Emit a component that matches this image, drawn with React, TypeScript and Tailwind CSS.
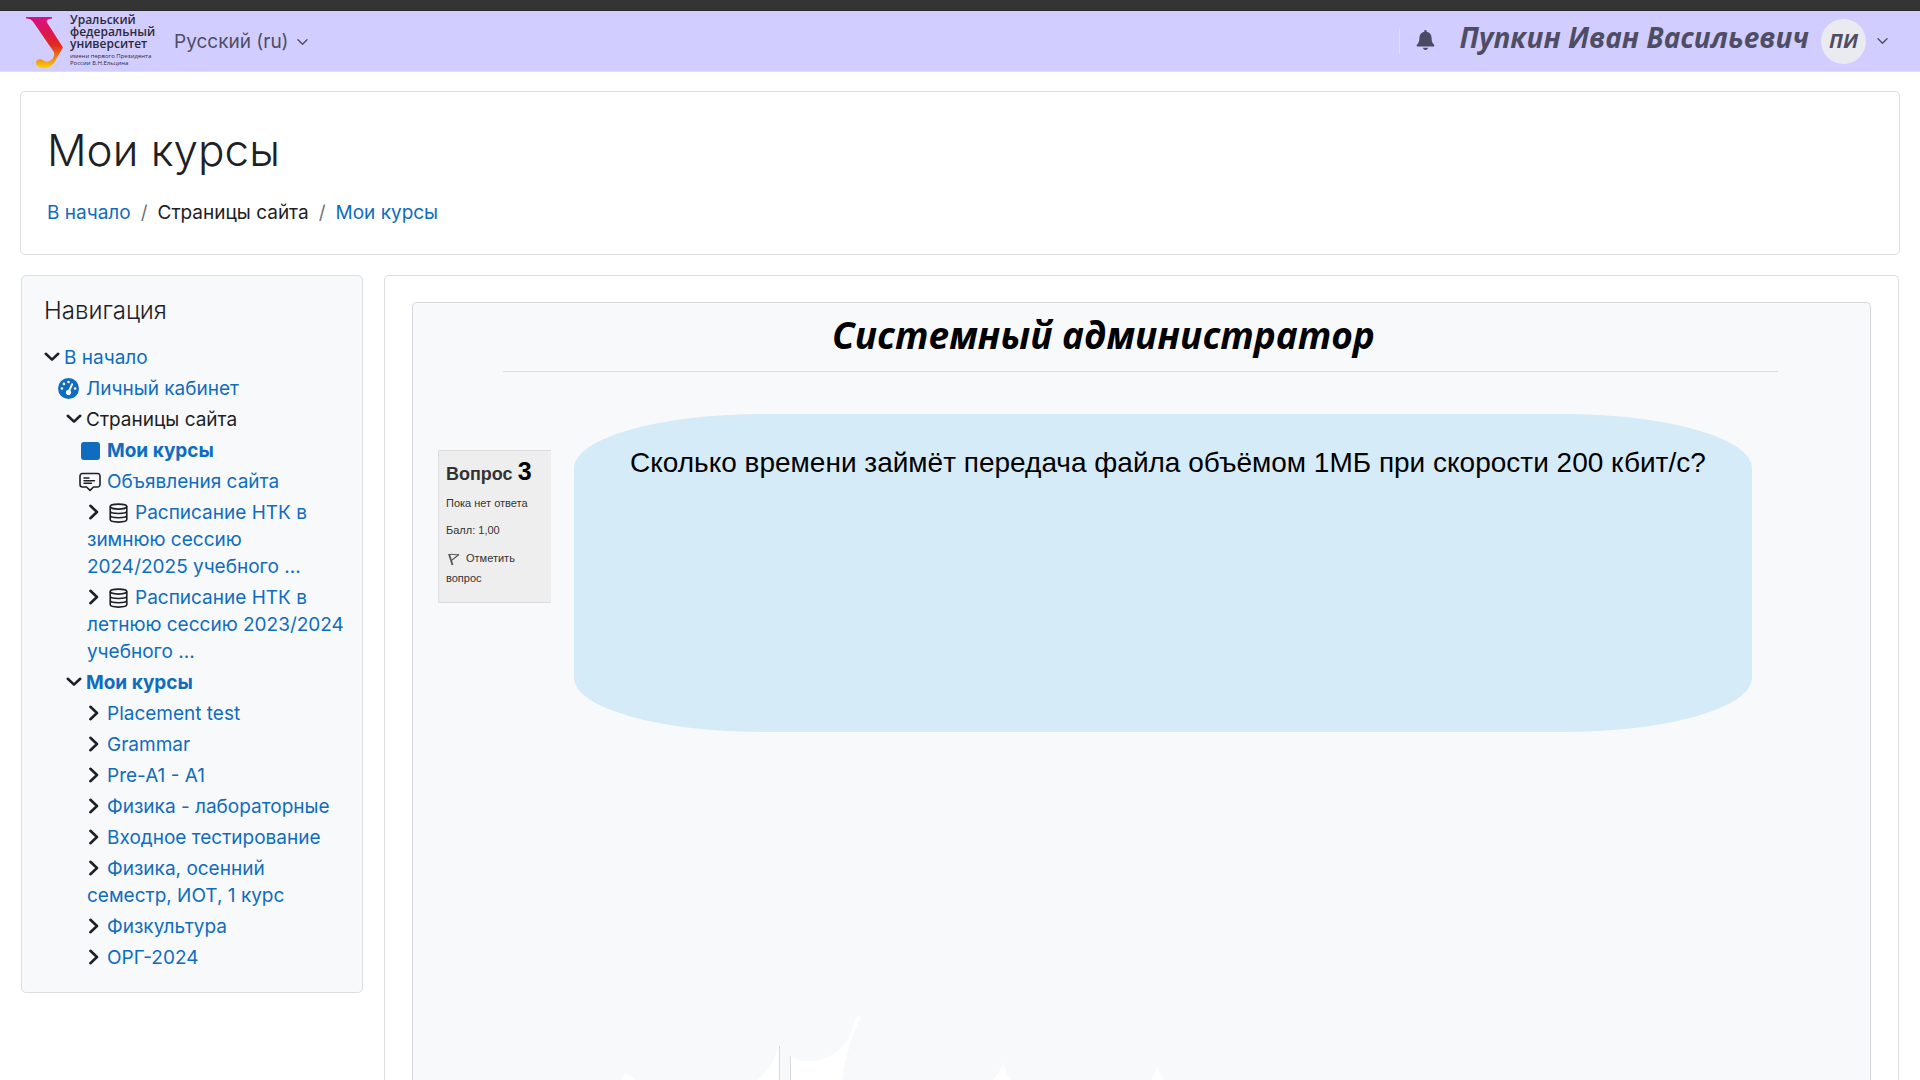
import React from "react";
import { FaGaugeHigh } from "react-icons/fa6";

type IconName = "gauge" | "square" | "comment" | "database";

interface NavItem {
  label: string;
  indent: string;
  toggle?: "open" | "closed";
  icon?: IconName;
  bold?: boolean;
  plain?: boolean;
}

const navItems: NavItem[] = [
  { label: "В начало", indent: "pl-0", toggle: "open" },
  { label: "Личный кабинет", indent: "pl-3.5", icon: "gauge" },
  { label: "Страницы сайта", indent: "pl-[22px]", toggle: "open", plain: true },
  { label: "Мои курсы", indent: "pl-[35px]", icon: "square", bold: true },
  { label: "Объявления сайта", indent: "pl-[35px]", icon: "comment" },
  { label: "Расписание НТК в зимнюю сессию 2024/2025 учебного ...", indent: "pl-[43px]", toggle: "closed", icon: "database" },
  { label: "Расписание НТК в летнюю сессию 2023/2024 учебного ...", indent: "pl-[43px]", toggle: "closed", icon: "database" },
  { label: "Мои курсы", indent: "pl-[22px]", toggle: "open", bold: true },
  { label: "Placement test", indent: "pl-[43px]", toggle: "closed" },
  { label: "Grammar", indent: "pl-[43px]", toggle: "closed" },
  { label: "Pre-A1 - A1", indent: "pl-[43px]", toggle: "closed" },
  { label: "Физика - лабораторные", indent: "pl-[43px]", toggle: "closed" },
  { label: "Входное тестирование", indent: "pl-[43px]", toggle: "closed" },
  { label: "Физика, осенний семестр, ИОТ, 1 курс", indent: "pl-[43px]", toggle: "closed" },
  { label: "Физкультура", indent: "pl-[43px]", toggle: "closed" },
  { label: "ОРГ-2024", indent: "pl-[43px]", toggle: "closed" },
];

function Chevron({ open }: { open: boolean }) {
  return open ? (
    <svg className="h-[10px] w-4" viewBox="0 0 16 10" fill="none" stroke="#1d2125" strokeWidth="2.6" strokeLinecap="round" strokeLinejoin="round">
      <path d="M1.8 1.8 8 7.6l6.2-5.8" />
    </svg>
  ) : (
    <svg className="ml-px h-4 w-[11px]" viewBox="0 0 11 16" fill="none" stroke="#1d2125" strokeWidth="2.6" strokeLinecap="round" strokeLinejoin="round">
      <path d="M2.4 1.8 9 8l-6.6 6.2" />
    </svg>
  );
}

function ThinChevron() {
  return (
    <svg className="h-1.5 w-[11px]" viewBox="0 0 11 6" fill="none" stroke="#4b4a63" strokeWidth="1.3" strokeLinecap="round" strokeLinejoin="round" aria-hidden="true">
      <path d="M1 .8 5.500 5.200 10 .8" />
    </svg>
  );
}

function NavIcon({ name }: { name: IconName }) {
  if (name === "gauge") {
    return <FaGaugeHigh className="size-[21px] text-[#0f6cbf]" aria-hidden="true" />;
  }
  if (name === "square") {
    return <span className="ml-0.5 block h-[18px] w-[19px] rounded-[3px] bg-[#0f6cbf]" />;
  }
  if (name === "comment") {
    return (
      <svg className="h-5 w-[22px]" viewBox="0 0 22 20" fill="none" stroke="#1d2125" strokeWidth="1.600" strokeLinejoin="round" strokeLinecap="round" aria-hidden="true">
        <path d="M3.500 1.500h15a2.500 2.500 0 0 1 2.500 2.500v8.500a2.500 2.500 0 0 1-2.500 2.500h-4l-3.500 3.300L7.500 15h-4A2.500 2.500 0 0 1 1 12.500V4a2.500 2.500 0 0 1 2.500-2.500Z" />
        <path d="M5 6h5M5 8.700h10.500M5 11.300h7.500" strokeWidth="1.400" />
      </svg>
    );
  }
  return (
    <svg className="h-5 w-[19px]" viewBox="0 0 19 20" fill="none" stroke="#1d2125" strokeWidth="1.600" aria-hidden="true">
      <ellipse cx="9.500" cy="3.600" rx="8.300" ry="2.500" />
      <path d="M1.200 3.600v13c0 1.500 3.700 2.500 8.300 2.500s8.300-1 8.300-2.500v-13M1.200 8c0 1.500 3.700 2.500 8.300 2.500s8.300-1 8.300-2.500M1.200 12.300c0 1.500 3.700 2.500 8.300 2.500s8.300-1 8.300-2.500" />
    </svg>
  );
}

function NavRow({ item }: { item: NavItem }) {
  const weight = item.bold ? "font-bold" : "font-normal";
  return (
    <li className={`${item.indent} pb-1 text-[19px]/[27px]`}>
      {item.toggle && (
        <button
          type="button"
          aria-label={item.toggle === "open" ? "Свернуть" : "Развернуть"}
          className="inline-flex h-[22px] w-5 items-center pb-1 align-middle"
        >
          <Chevron open={item.toggle === "open"} />
        </button>
      )}
      {item.icon && (
        <span className={`inline-flex h-[22px] items-center pb-0.5 align-middle ${item.toggle ? "w-7 pl-0.5" : "w-7"}`}>
          <NavIcon name={item.icon} />
        </span>
      )}
      {item.plain ? (
        <span>{item.label}</span>
      ) : (
        <a href="#" className={`${weight} text-[#0f6cbf]`}>
          {item.label}
        </a>
      )}
    </li>
  );
}

function Logo() {
  return (
    <a href="#" aria-label="Уральский федеральный университет" className="flex items-start gap-[7px] text-[#2b2a3a]">
      <svg className="mt-0.5 h-[53px] w-[37px]" viewBox="0 0 37 53" aria-hidden="true">
        <defs>
          <linearGradient id="logo" x1="0" y1="0" x2="0" y2="1">
            <stop offset="0" stopColor="#d90f86" />
            <stop offset="0.300" stopColor="#dc1550" />
            <stop offset="0.550" stopColor="#e02a1c" />
            <stop offset="0.780" stopColor="#f07a18" />
            <stop offset="1" stopColor="#fdd305" />
          </linearGradient>
        </defs>
        <path
          fill="url(#logo)"
          d="M0 1h26v1.500c-4 .5-6 1.500-5 4L37 31.500l-6.500 11C27 49.500 23.500 52 18 52c-5 0-8-2.500-8-5.500 0-2 1.800-3.300 4-3.300 3 0 4 2.300 7 2.300 5 0 9-6 6.500-10L8 7C5.500 3.200 3.500 2.500 0 2.500Z"
        />
      </svg>
      <span className="flex flex-col whitespace-nowrap font-['Open_Sans',sans-serif]">
        <span className="text-xs/3 font-semibold">
          <span className="block">Уральский</span>
          <span className="block">федеральный</span>
          <span className="block">университет</span>
        </span>
        <span className="mt-[3px] text-[6px]/[7px]">
          <span className="block">имени первого Президента</span>
          <span className="block">России Б.Н.Ельцина</span>
        </span>
      </span>
    </a>
  );
}

function Header() {
  return (
    <header className="border-t-[10px] border-[#343434]">
      <div className="flex h-[62px] items-center justify-between border-t border-b border-t-[#2a2830] border-b-[#dedfe6] bg-[#d2cdff] pr-8 pl-[26px] text-[#4f4d66]">
        <div className="flex items-center gap-[19px]">
          <Logo />
          <button type="button" className="flex items-center gap-2 pt-0.5 text-[19px]/6">
            Русский (ru) <ThinChevron />
          </button>
        </div>
        <div className="flex items-center">
          <span className="mr-4 h-[26px] w-px bg-[#dfe0ea]" />
          <button type="button" aria-label="Уведомления" className="pb-0.5">
            <svg className="h-5 w-[19px]" viewBox="0 0 19 20" fill="#4b4a63" aria-hidden="true">
              <path d="M9.500 0c.7 0 1.200.5 1.200 1.200v.6c2.900.6 4.900 3 4.900 6 0 4 .9 5.300 2.300 6.700.9.900.4 2.100-.8 2.100H1.900c-1.200 0-1.700-1.200-.8-2.100 1.400-1.400 2.300-2.700 2.300-6.700 0-3 2-5.400 4.900-6v-.6C8.300.5 8.800 0 9.500 0ZM7 17.700h5c-.2 1.400-1.200 2.200-2.500 2.200S7.200 19.100 7 17.700Z" />
            </svg>
          </button>
          <button type="button" className="ml-6 flex items-center font-['Open_Sans',sans-serif] font-bold italic">
            <span className="pb-2 text-[28px]/8">Пупкин Иван Васильевич</span>
            <span className="mr-[11px] ml-3 grid size-[45px] place-items-center rounded-full bg-[#e9ebf1] text-xl/6">ПИ</span>
            <ThinChevron />
          </button>
        </div>
      </div>
    </header>
  );
}

function QuestionInfo() {
  return (
    <aside className="mt-9 h-[153px] w-[113px] shrink-0 rounded-l-xs border border-r-0 border-[#dcdcde] bg-[#efeeef] px-[7px] font-['Liberation_Sans',Arial,sans-serif] text-[11px]/5 text-[#333]">
      <h3 className="mt-1 text-lg/8 font-bold">
        Вопрос <span className="text-[25px] text-black">3</span>
      </h3>
      <p className="mt-[3px]">Пока нет ответа</p>
      <p className="mt-[7px]">Балл: 1,00</p>
      <button type="button" className="mt-2 text-left">
        <svg className="mr-1.5 ml-0.5 inline-block h-[13px] w-3" viewBox="0 0 12 13" fill="none" stroke="#555" aria-hidden="true">
          <path d="M1 1l3.500 11" strokeWidth="1.800" />
          <path d="M2 1.500c3-1 5 .8 9 0L4 7" strokeWidth="1.100" />
        </svg>
        Отметить вопрос
      </button>
    </aside>
  );
}

function WaveFooter() {
  return (
    <svg className="mt-auto ml-[207px] h-[70px] w-[560px]" viewBox="620 1010 560 70" fill="white" aria-hidden="true">
      <path d="M622 1080l3-7q6 2 11 7Z" />
      <path d="M757 1080q15-10 22-34v34Z" />
      <path d="M791 1056q12 9 29 4 29-8 35-42l6-2q-5 10-11 28-6 20-8 36H791Z" />
      <path d="M993 1080q7-8 11-18 1 10 7 18Z" />
      <path d="M1151 1080q4-6 6-15 2 9 7 15Z" />
      <path d="M779.500 1046v34M790.500 1056v24" stroke="#d9d9db" />
    </svg>
  );
}

export default function App() {
  return (
    <div className="flex h-screen flex-col overflow-hidden bg-white font-['Inter',sans-serif] text-[#1d2125]">
      <Header />
      <section className="mx-5 mt-[19px] rounded-[5px] border border-[#dcdddf] px-[26px] pt-[31px] pb-7">
        <h1 className="text-[44px]/[54px] font-light">Мои курсы</h1>
        <nav aria-label="Путь" className="mt-[22px] flex gap-2.5 text-[19px]/[27px]">
          <a href="#" className="text-[#0f6cbf]">В начало</a>
          <span className="text-[#6a737b]">/</span>
          <span>Страницы сайта</span>
          <span className="text-[#6a737b]">/</span>
          <a href="#" className="text-[#0f6cbf]">Мои курсы</a>
        </nav>
      </section>
      <div className="mx-[21px] mt-5 flex min-h-0 flex-1 items-stretch gap-[21px]">
        <nav aria-label="Навигация" className="w-[342px] shrink-0 self-start rounded-[5px] border border-[#dcdddf] bg-[#f8f9fb] pt-[19px] pr-4 pb-[17px] pl-[22px]">
          <h2 className="mb-[17px] text-2xl/8 font-light">Навигация</h2>
          <ul>
            {navItems.map((item, i) => (
              <NavRow key={i} item={item} />
            ))}
          </ul>
        </nav>
        <main className="flex min-w-0 flex-1 flex-col rounded-t-[5px] border border-b-0 border-[#dcdddf] px-[27px] pt-[26px]">
          <div className="flex min-h-0 flex-1 flex-col rounded-t-[5px] border border-b-0 border-[#d6d7da] bg-[#f8f9fb]">
            <h2 className="mr-[76px] mt-[9px] text-center font-['Open_Sans',sans-serif] text-[37px]/[46px] font-bold italic text-black">
              Системный администратор
            </h2>
            <hr className="mt-[13px] mr-[92px] ml-[90px] border-[#dcdddf]" />
            <div className="mt-[42px] mr-[118px] ml-[25px] flex gap-[23px]">
              <QuestionInfo />
              <div className="h-[318px] min-w-0 flex-1 rounded-[190px/54px] bg-[#d6ebf8] pt-[33px] pl-14">
                <p className="whitespace-nowrap font-['Liberation_Sans',Arial,sans-serif] text-[28px]/8 text-black">
                  Сколько времени займёт передача файла объёмом 1МБ при скорости 200 кбит/с?
                </p>
              </div>
            </div>
            <WaveFooter />
          </div>
        </main>
      </div>
    </div>
  );
}
